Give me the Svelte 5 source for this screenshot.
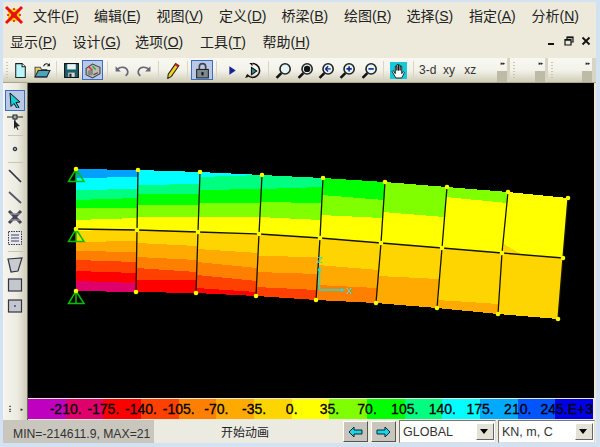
<script>
  const C = { b:'#00a0ff', c:'#00ffff', s:'#00ff80', g:'#00ff00', l:'#80ff00', y:'#ffff00', a:'#ffd500', o:'#ffaa00', r:'#ff8000', e:'#ff4000', d:'#ff0000', m:'#e0006c' };
  const top = [[76,169],[138,170],[200,172],[262,175],[323,178],[385,182],[447,187],[508,192],[568,198]];
  const mid = [[76,229],[137,230],[198,232],[259,234],[320,238],[381,243],[442,248],[502,253],[563,258]];
  const bot = [[76,291],[136,292],[196,293],[256,296],[316,300],[376,303],[437,308],[498,314],[558,319]];
  // each column: colour keys, y of each lower boundary on left and right edge
  const cols = [
    ['bcsglyaoredm',[178,190,200,208,220,231,242,251,260,271,281,291],[177,189,198,208,218,229,241,252,262,273,283,292]],
    ['csglyaored',[185,194,205,217,230,243,257,268,280,292],[184,194,205,217,231,246,260,272,280,293]],
    ['csglyaored',[177,190,203,217,232,249,262,275,288,293],[175,189,203,217,234,253,268,281,292,296]],
    ['sglyaore',[189,202,217,234,256,272,287,296],[187,203,220,238,257,274,290,300]],
    ['glyaor',[195,215,238,265,285,300],[200,218,243,270,288,303]],
    ['lyao',[212,243,276,303],[217,248,279,308]],
    ['lyao',[197,248,300,308],[203,253,304,314]],
    ['ya',[253,314],[258,319]]
  ];
  const xAt = (i, y) => {
    const [t, m, b] = [top[i], mid[i], bot[i]];
    if (y <= m[1]) return t[0] + (m[0] - t[0]) * (y - t[1]) / (m[1] - t[1]);
    return m[0] + (b[0] - m[0]) * (y - m[1]) / (b[1] - m[1]);
  };
  const bands = cols.flatMap(([keys, L, R], i) => [...keys].map((k, n) => {
    const y0 = n ? L[n - 1] : top[i][1], y1 = n ? R[n - 1] : top[i + 1][1];
    const y2 = R[n], y3 = L[n];
    return { fill: C[k], pts: `${xAt(i,y0)},${y0} ${xAt(i+1,y1)},${y1} ${xAt(i+1,y2)},${y2} ${xAt(i,y3)},${y3}` };
  }));
  const line = a => a.map(p => p.join(',')).join(' ');
  const verticals = top.map((t, i) => line([t, mid[i], bot[i]]));
  const nodes = [...top, ...mid, ...bot];
  const supports = [169, 229, 291];
  const scale = ['#c000c0','#e0006c','#ff0000','#ff4000','#ff8000','#ffaa00','#ffd500','#ffff00','#80ff00','#00ff00','#00ff80','#00ffff','#00aaff','#0055ff','#0000e8'];
  const labels = ['-210.','-175.','-140.','-105.','-70.','-35.','0.','35.','70.','105.','140.','175.','210.','','245.E+3'];
  const menu1 = [['文件','F'],['编辑','E'],['视图','V'],['定义','D'],['桥梁','B'],['绘图','R'],['选择','S'],['指定','A'],['分析','N']];
  const menu2 = [['显示','P'],['设计','G'],['选项','O'],['工具','T'],['帮助','H']];
</script>

<div class="win">
  <header class="menus">
    <div class="row one">
      <svg class="logo" viewBox="0 0 20 20"><rect x="4" y="4" width="12" height="12" fill="#f6d000"/><path d="M2 2 18 18M18 2 2 18" stroke="#e81010" stroke-width="3"/><path d="M10 3v14M3 10h14" stroke="#e81010" stroke-width="1.500" stroke-dasharray="2 2"/></svg>
      {#each menu1 as [t, k]}<span class="mi">{t}(<u>{k}</u>)</span>{/each}
    </div>
    <div class="row two">
      {#each menu2 as [t, k]}<span class="mi">{t}(<u>{k}</u>)</span>{/each}
      <div class="mdi">
        <svg width="10" height="10" viewBox="0 0 10 10"><rect x="1" y="7" width="6" height="2" fill="#111"/></svg>
        <svg width="10" height="10" viewBox="0 0 10 10"><path d="M3 3V1h6v5H7M1 3.500h6V9H1z" fill="none" stroke="#111" stroke-width="1.200"/><path d="M3 1.500h6M1 4h6" stroke="#111" stroke-width="1.400"/></svg>
        <svg width="10" height="10" viewBox="0 0 10 10"><path d="M1.500 1.500l7 7M8.500 1.500l-7 7" stroke="#111" stroke-width="1.800"/></svg>
      </div>
    </div>
  </header>

  <div class="toolbars">
    <div class="tb main">
      <span class="grip"></span>
      <span class="btn"><svg viewBox="0 0 16 16"><path d="M3.500 1.500h6l3 3v10h-9z" fill="#b8f4f8" stroke="#222"/><path d="M9.500 1.500v3h3" fill="#fff" stroke="#222"/></svg></span>
      <span class="btn"><svg viewBox="0 0 16 16"><path d="M1 5h5l1 2h5v7H1z" fill="#e8c860" stroke="#554"/><path d="M1 14l3-6h11l-3 6z" fill="#4aa6b8" stroke="#223"/><path d="M9 4c1-3 4-3 5-1" fill="none" stroke="#222"/><path d="M15 1v3h-3z" fill="#222"/></svg></span>
      <span class="sep"></span>
      <span class="btn"><svg viewBox="0 0 16 16"><path d="M1.500 1.500h13v13h-13z" fill="#1f5f6a" stroke="#111"/><rect x="4" y="2" width="8" height="5" fill="#e6f4f4"/><rect x="5" y="10" width="6" height="4" fill="#d8d8d8"/><rect x="6" y="11" width="2" height="3" fill="#222"/></svg></span>
      <span class="btn on"><svg viewBox="0 0 16 16"><path d="M2 6l6-4 7 3v6l-7 4-6-3z" fill="#bcbcb4" stroke="#444"/><circle cx="6" cy="10" r="2.500" fill="#888"/><path d="M4 4l4 4" stroke="#cc3030" stroke-width="1.400"/><path d="M8 4l3 3" stroke="#30a040" stroke-width="1.400"/><path d="M9 12l4-2" stroke="#333"/></svg></span>
      <span class="sep"></span>
      <span class="btn"><svg viewBox="0 0 16 16"><path d="M3 7c3-3 9-3 10 2 .4 2-1 3-2 4" fill="none" stroke="#667" stroke-width="1.600"/><path d="M1.500 4v5h5z" fill="#667"/></svg></span>
      <span class="btn"><svg viewBox="0 0 16 16"><path d="M13 7c-3-3-9-3-10 2-.4 2 1 3 2 4" fill="none" stroke="#667" stroke-width="1.600"/><path d="M14.500 4v5h-5z" fill="#667"/></svg></span>
      <span class="sep"></span>
      <span class="btn"><svg viewBox="0 0 16 16"><path d="M11 1.500l3 2-7 10-3.500 2 .5-4z" fill="#f4d020" stroke="#222"/><path d="M10.500 2l3 2" stroke="#c02020" stroke-width="2"/></svg></span>
      <span class="sep"></span>
      <span class="btn on"><svg viewBox="0 0 16 16"><path d="M5 7V4.500a3 3 0 0 1 6 0V7" fill="none" stroke="#444" stroke-width="1.600"/><rect x="2.500" y="7" width="11" height="8" fill="#7c8a90" stroke="#222"/><rect x="7" y="9.500" width="2" height="3" fill="#111"/></svg></span>
      <span class="sep"></span>
      <span class="btn"><svg viewBox="0 0 16 16"><path d="M6 4l6 4-6 4z" fill="#16229a"/></svg></span>
      <span class="btn"><svg viewBox="0 0 16 16"><path d="M8 1.500a6.500 6.500 0 1 1-5 10.500" fill="none" stroke="#111" stroke-width="1.400"/><path d="M7 5l5 3.500-5 3.500z" fill="#2a8a98" stroke="#111"/><path d="M1 15l3-1-1-3zM5 1h3v3z" fill="#111"/></svg></span>
      <span class="sep wider"></span>
      {#each ['', 'fit', 'back', 'plus', 'minus'] as z}
        <span class="btn"><svg viewBox="0 0 16 16"><circle cx="9.500" cy="6.500" r="4.800" fill="#e4f6f6" stroke="#222" stroke-width="1.500"/><path d="M6 10.500L1.500 15" stroke="#111" stroke-width="2.400"/>
          {#if z === 'fit'}<circle cx="9.500" cy="6.500" r="3" fill="#111"/>{/if}
          {#if z === 'back'}<path d="M7 6.500h5M7 6.500l2.500-2.500M7 6.500L9.500 9" stroke="#16228a" stroke-width="1.300" fill="none"/>{/if}
          {#if z === 'plus'}<path d="M7 6.500h5M9.500 4v5" stroke="#16228a" stroke-width="1.500"/>{/if}
          {#if z === 'minus'}<path d="M7 6.500h5" stroke="#16228a" stroke-width="1.500"/>{/if}
        </svg></span>
      {/each}
      <span class="sep"></span>
      <span class="btn hand"><svg viewBox="0 0 16 16"><rect width="16" height="16" fill="#16c8d8"/><path d="M3 8l2 3V4h1.500v4V2.500H8V8 3h1.500v5V4H11v7l1.500-2 1 1L11 15H5.500L2 9z" fill="#fff" stroke="#111" stroke-width=".8"/></svg></span>
      <span class="sep"></span>
      <span class="btn txt">3-d</span><span class="btn txt">xy</span><span class="btn txt">xz</span>
      <span class="end"><i>‣‣</i><b></b></span>
    </div>
    <div class="tb small"><span class="grip"></span><span class="end"><i>‣‣</i><b></b></span></div>
    <div class="tb small wide"><span class="grip"></span><span class="end"><i>‣‣</i><b></b></span></div>
  </div>

  <div class="body">
    <aside class="side">
      <span class="tool on"><svg viewBox="0 0 16 16"><path d="M3 1l10 9-4 .5 3 5-2 1-3-5-3 3z" fill="#16d0d8" stroke="#111"/></svg></span>
      <span class="tool second"><svg viewBox="0 0 16 16"><path d="M0 3h16" stroke="#222"/><rect x="6" y="1" width="4" height="4" fill="#9ab" stroke="#222"/><path d="M8 5v6" stroke="#222"/><path d="M7 6l6 6-3 .4 1.500 3-1 .6-1.500-3-2 2z" fill="#222"/></svg></span>
      <span class="hsep"></span>
      <span class="tool"><svg viewBox="0 0 16 16"><circle cx="8" cy="8" r="1.800" fill="#8a9aa8" stroke="#223"/></svg></span>
      <span class="hsep"></span>
      <span class="tool"><svg viewBox="0 0 16 16"><path d="M2 2l12 12" stroke="#334" stroke-width="1.700"/></svg></span>
      <span class="tool"><svg viewBox="0 0 16 16"><path d="M2 3l12 11" stroke="#556" stroke-width="1.700"/></svg></span>
      <span class="tool"><svg viewBox="0 0 16 16"><path d="M2 2l12 12M14 2L2 14" stroke="#445" stroke-width="3"/><path d="M3 5h10M3 11h10" stroke="#889" stroke-width="1.500"/></svg></span>
      <span class="tool"><svg viewBox="0 0 16 16"><rect x="1.500" y="1.500" width="13" height="13" fill="#e8e8f0" stroke="#334" stroke-dasharray="1.500 1"/><path d="M4 5h8M4 8h8M4 11h8" stroke="#445" stroke-width="1.200"/></svg></span>
      <span class="hsep"></span>
      <span class="tool"><svg viewBox="0 0 16 16"><path d="M1 2l14-1-4 13-7 1z" fill="#c8ccd0" stroke="#334" stroke-width="1.200"/></svg></span>
      <span class="tool"><svg viewBox="0 0 16 16"><rect x="1.500" y="2" width="13" height="12" fill="#c4c8cc" stroke="#334" stroke-width="1.200"/></svg></span>
      <span class="tool"><svg viewBox="0 0 16 16"><rect x="1.500" y="2" width="13" height="12" fill="#c4c8cc" stroke="#334" stroke-width="1.200"/><path d="M7 8h2" stroke="#66a" stroke-width="2"/></svg></span>
      <span class="sideend"><i>⠇</i><i>‣</i></span>
    </aside>

    <main class="view">
      <svg class="canvas" viewBox="28 83 566 315" preserveAspectRatio="none">
        <g shape-rendering="crispEdges">
          {#each bands as b}<polygon points={b.pts} fill={b.fill}/>{/each}
          <polygon points="504,244 522,255 503,253" fill="#ffd500"/>
        </g>
        <polyline points={line(mid)} class="mesh"/>
        {#each verticals as v, i}{#if i}<polyline points={v} class="mesh"/>{/if}{/each}
        {#each supports as y}<path d="M76 {y} 68.500 {y+12.500}H84ZM76 {y}V{y+12.500}" class="sup"/>{/each}
        {#each nodes as [x, y]}<circle cx={x} cy={y} r="2.300" fill="#ffff00"/>{/each}
        <g class="axes">
          <path d="M319.500 290V269M319.500 290H343"/>
          <path d="M319.500 266.500l-2 4.500h4zM345.500 290l-4.500-2v4z" class="tip"/>
          <text x="319.500" y="263">Z</text>
          <text x="349.500" y="294">X</text>
        </g>
      </svg>
      <div class="scale">
        {#each scale as c, i}<span class="cell" style="background:{c}"><em class:last={i === 14}>{labels[i]}</em></span>{/each}
      </div>
    </main>
  </div>

  <footer class="status">
    <div class="minmax">MIN=-214611.9, MAX=21</div>
    <div class="anim">开始动画</div>
    <span class="arrow"><svg width="15" height="12" viewBox="0 0 15 12"><path d="M1 6l5-5v3h8v4H6v3z" fill="#18d8e8" stroke="#123"/></svg></span>
    <span class="arrow"><svg width="15" height="12" viewBox="0 0 15 12"><path d="M14 6L9 1v3H1v4h8v3z" fill="#18d8e8" stroke="#123"/></svg></span>
    <div class="combo"><span>GLOBAL</span><b></b></div>
    <div class="combo"><span>KN, m, C</span><b></b></div>
  </footer>
</div>

<style>
  :global(body) { margin: 0; background: #d3e2f3; }
  .win { width: 600px; height: 447px; box-sizing: border-box; padding: 2px 4px 4px 3px; display: flex; flex-direction: column; font-family: "Liberation Sans", "Noto Sans CJK SC", sans-serif; color: #222; overflow: hidden; }
  .menus { background: #edeadc; height: 56px; flex: none; }
  .row { display: flex; align-items: center; height: 25px; font-size: 14px; }
  .one { padding-left: 1px; height: 26px; }
  .two { padding-left: 7px; }
  .logo { width: 20px; height: 20px; margin-right: 9px; flex: none; }
  .one .mi { width: 62.500px; flex: none; white-space: nowrap; }
  .one .mi:first-of-type { width: 61px; }
  .two .mi { width: 62.500px; flex: none; white-space: nowrap; }
  .two .mi:nth-child(3) { width: 65px; }
  .mdi { margin-left: auto; display: flex; gap: 7px; padding-right: 5px; align-items: center; }
  .toolbars { display: flex; height: 25px; flex: none; background: #d8d5c4; border-bottom: 1px solid #a8a58c; box-sizing: border-box; }
  .tb { display: flex; align-items: center; height: 100%; background: linear-gradient(#f8f7f1, #f4f3ea 50%, #d0cdb8); position: relative; }
  .main { width: 504px; }
  .small { width: 35px; margin-left: 3px; }
  .wide { width: 44px; flex: none; }
  .grip { width: 7.300px; flex: none; align-self: stretch; margin: 4px 0; background: repeating-linear-gradient(#c9c6b4 0 1px, transparent 1px 3px) 3px 0 / 2px 100% no-repeat; }
  .btn { width: 21.300px; height: 20px; flex: none; display: flex; align-items: center; justify-content: center; box-sizing: border-box; }
  .btn svg { width: 17px; height: 17px; }
  .btn.on { background: #b9c8e6; outline: 1px solid #3c6cc0; outline-offset: -1px; }
  .txt { font-size: 12px; color: #333; }
  .sep { width: 8px; flex: none; height: 18px; background: linear-gradient(#d8d5c8, #d8d5c8) center / 1px 100% no-repeat; }
  .sep.wider { width: 10px; }
  .end { position: absolute; right: 0; top: 0; bottom: 0; width: 11px; display: flex; flex-direction: column; align-items: center; justify-content: space-between; }
  .end i { font-size: 9px; line-height: 12px; font-style: normal; letter-spacing: -1px; color: #222; }
  .end b { width: 10px; height: 11px; background: #bdbaa6; }
  .body { display: flex; height: 337px; flex: none; }
  .side { width: 25px; flex: none; display: flex; flex-direction: column; align-items: center; background: linear-gradient(90deg, #f6f5ee, #ecebe0 60%, #cfccb8); border-right: 1px solid #6a6a60; box-sizing: border-box; padding-top: 7px; position: relative; }
  .tool { width: 20px; height: 20.500px; flex: none; display: flex; align-items: center; justify-content: center; box-sizing: border-box; }
  .tool svg { width: 16px; height: 16px; }
  .tool.on { background: #b9c8e6; outline: 1px solid #3c6cc0; outline-offset: -1px; }
  .tool.second { margin-top: 1.500px; }
  .hsep { width: 15px; height: 1px; margin: 2.750px 0; background: #c8c5b4; flex: none; }
  .sideend { margin-top: auto; display: flex; justify-content: center; gap: 5px; font-size: 9px; line-height: 14px; padding-bottom: 3px; }
  .sideend i { font-style: normal; color: #222; }
  .view { flex: 1; display: flex; flex-direction: column; background: #edeadc; width: 566px; }
  .canvas { width: 566px; height: 315px; display: block; background: #000; flex: none; }
  .mesh { fill: none; stroke: #141400; stroke-width: 1.300; }
  .sup { fill: none; stroke: #00c000; stroke-width: 1.500; }
  .axes path { fill: none; stroke: #18e0e0; stroke-width: 1.400; }
  .axes path.tip { fill: #18e0e0; stroke: none; }
  .axes text { fill: #18e0e0; font: 9px "Liberation Sans", sans-serif; text-anchor: middle; }
  .scale { display: flex; height: 20px; margin-top: 1px; width: 565px; overflow: hidden; }
  .cell { flex: 1; position: relative; }
  .cell em { position: absolute; z-index: 1; left: 100%; top: 1px; transform: translateX(-50%); font: 14px/18px "Liberation Sans", sans-serif; color: #000; -webkit-text-stroke: .3px #000; white-space: nowrap; }
  .cell em.last { left: auto; right: 0; transform: none; }
  .status { display: flex; align-items: stretch; height: 23px; flex: none; background: #edeadc; font-size: 12.200px; }
  .minmax { width: 151px; flex: none; background: #c9c7bd; padding: 4px 0 0 10px; box-sizing: border-box; white-space: nowrap; overflow: hidden; line-height: 20px; color: #333; }
  .anim { width: 186px; flex: none; text-align: center; padding-right: 4px; box-sizing: border-box; line-height: 26px; font-size: 12px; background: #ecebe2; }
  .arrow { width: 25px; margin: 1px 0 1px 3px; flex: none; background: #c8c6bc; border: 1px solid; border-color: #fff #555 #555 #fff; box-sizing: border-box; display: flex; align-items: center; justify-content: center; }
  .arrow + .combo { margin-left: 3px; }
  .combo { width: 97px; margin: 0 0 0 2px; height: 23px; flex: none; background: #fff; border: 1px solid; border-color: #777 #ddd #ddd #777; box-sizing: border-box; display: flex; align-items: center; justify-content: space-between; font-size: 12.500px; padding-left: 3px; color: #333; }
  .combo b { width: 18px; height: 17px; margin-right: 1px; background: #e4e2d6; border: 1px solid; border-color: #fff #666 #666 #fff; box-sizing: border-box; position: relative; flex: none; }
  .combo b::after { content: ""; position: absolute; left: 3px; top: 5px; border: 4.500px solid transparent; border-top: 5px solid #000; border-bottom: 0; }
</style>
